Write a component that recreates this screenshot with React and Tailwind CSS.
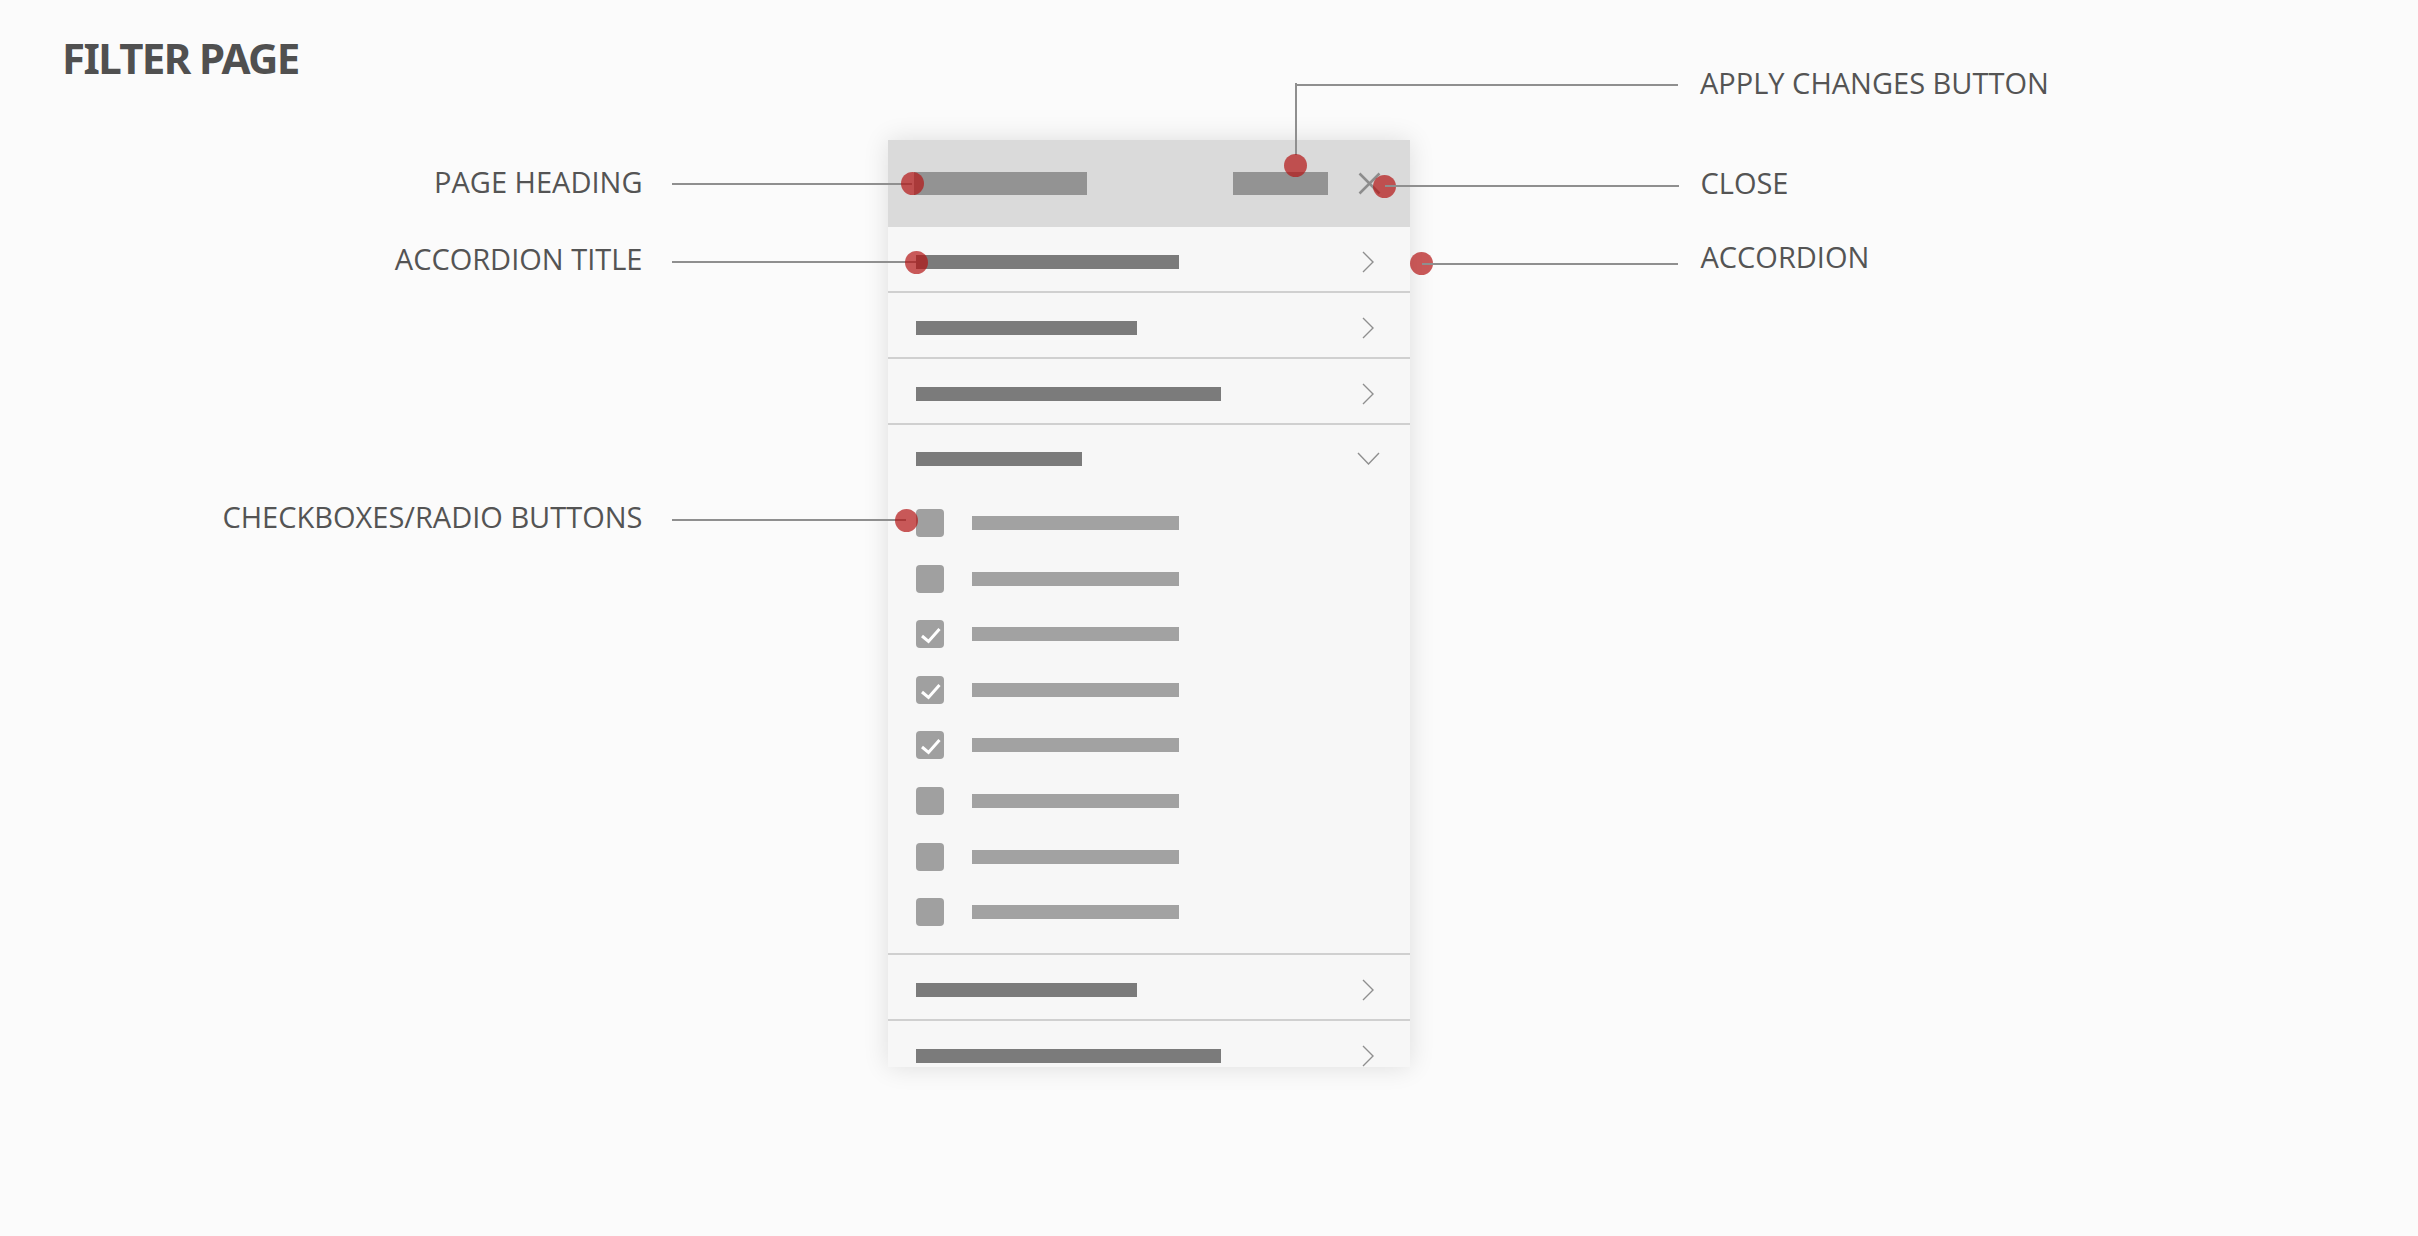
import React from "react";

const Chevron = () => (
  <div className="w-[24px] flex justify-center">
    <svg width="12" height="22" viewBox="0 0 12 22" fill="none">
      <polyline points="1,1 11,11 1,21" stroke="#8f8f8f" strokeWidth="1.4" />
    </svg>
  </div>
);

const ChevronDown = () => (
  <div className="w-[24px] flex justify-center">
    <svg width="23" height="13" viewBox="0 0 23 13" fill="none">
      <polyline points="1,1 11.5,12 22,1" stroke="#8f8f8f" strokeWidth="1.4" />
    </svg>
  </div>
);

const Row = ({ w }) => (
  <div className="h-[66px] pt-[6px] border-b-2 border-[#d0d0d0] flex items-center justify-between pl-[28px] pr-[30px]">
    <div className="h-[14px] bg-[#7b7b7b]" style={{ width: w }} />
    <Chevron />
  </div>
);

const Check = ({ checked }) => (
  <div className="flex items-center gap-[28px] h-[28px]">
    <div className="w-[28px] h-[28px] rounded-[4px] bg-[#a0a0a0] flex items-center justify-center">
      {checked && (
        <svg width="28" height="28" viewBox="0 0 28 28" fill="none">
          <polyline points="6,16 12.5,21.5 23.5,9" stroke="#ffffff" strokeWidth="3" />
        </svg>
      )}
    </div>
    <div className="w-[207px] h-[14px] bg-[#a2a2a2]" />
  </div>
);

const Dot = () => <div className="w-[23px] h-[23px] shrink-0 rounded-full bg-[rgba(180,20,20,0.7)]" />;

const Label = ({ children, shift = "" }) => (
  <div className={`text-[29px] leading-none text-[#545454] whitespace-nowrap ${shift}`}>{children}</div>
);

/* callout pointing right: label — line — dot ; anchored by dot centre */
const LeftCallout = ({ label, dx, dy, line, shift }) => (
  <div
    className="absolute h-[23px] flex items-center"
    style={{ right: 2418 - (dx + 11.5), top: dy - 11.5 }}
  >
    <Label shift={shift}>{label}</Label>
    <div className="h-[2px] bg-[#8f8f8f] ml-[29px] -mr-[11px]" style={{ width: line }} />
    <Dot />
  </div>
);

/* callout pointing left: dot — line — label */
const RightCallout = ({ label, dx, dy, shift }) => (
  <div className="absolute h-[23px] flex items-center" style={{ left: dx - 11.5, top: dy - 11.5 }}>
    <Dot />
    <div className="h-[2px] bg-[#8f8f8f] -ml-[11px] mr-[22px]" style={{ width: 1678 - dx }} />
    <Label shift={shift}>{label}</Label>
  </div>
);

export default function App() {
  const checks = [false, false, true, true, true, false, false, false];
  return (
    <div
      className="relative w-[2418px] h-[1236px] overflow-hidden bg-[#fbfbfb] pt-[37px] pl-[62px]"
      style={{ fontFamily: '"Open Sans", "Noto Sans", sans-serif' }}
    >
      <h1
        className="text-[42px] leading-none font-bold text-[#505050] h-[42px] tracking-[-1.6px]"
        style={{ fontFamily: '"Noto Sans", "Open Sans", sans-serif' }}
      >
        FILTER PAGE
      </h1>

      <div className="mt-[61px] ml-[826px] w-[522px] h-[927px] bg-[#f7f7f7] overflow-hidden shadow-[0_0_24px_rgba(0,0,0,0.12)]">
        <div className="h-[87px] bg-[#dadada] flex items-center pl-[26px] pr-[29px]">
          <div className="w-[173px] h-[23px] bg-[#939393]" />
          <div className="flex-1" />
          <div className="w-[95px] h-[23px] bg-[#939393]" />
          <svg className="ml-[30px]" width="23" height="23" viewBox="0 0 23 23" fill="none">
            <line x1="1.5" y1="1.5" x2="21.5" y2="21.5" stroke="#8d8d8d" strokeWidth="2.5" />
            <line x1="21.5" y1="1.5" x2="1.5" y2="21.5" stroke="#8d8d8d" strokeWidth="2.5" />
          </svg>
        </div>

        <Row w={263} />
        <Row w={221} />
        <Row w={305} />

        <div className="border-b-2 border-[#d0d0d0]">
          <div className="h-[64px] pt-[3px] flex items-center justify-between pl-[28px] pr-[30px]">
            <div className="w-[166px] h-[14px] bg-[#7b7b7b]" />
            <ChevronDown />
          </div>
          <div className="flex flex-col gap-[27.6px] pt-[20px] pb-[27px] pl-[28px]">
            {checks.map((c, i) => (
              <Check key={i} checked={c} />
            ))}
          </div>
        </div>

        <Row w={221} />
        <Row w={305} />
      </div>

      {/* annotation callouts over the canvas */}
      <LeftCallout label="PAGE HEADING" dx={912} dy={183.5} line={240} shift="-translate-y-[2px]" />
      <LeftCallout label="ACCORDION TITLE" dx={916} dy={262} line={244} shift="-translate-y-[4px]" />
      <LeftCallout label="CHECKBOXES/RADIO BUTTONS" dx={906} dy={520} line={234} shift="-translate-y-[4px]" />
      <RightCallout label="CLOSE" dx={1384} dy={186} shift="-translate-y-[4px]" />
      <RightCallout label="ACCORDION" dx={1421.7} dy={263.8} shift="-translate-y-[7px]" />

      {/* apply changes: elbow callout */}
      <div className="absolute left-[1284px] top-[73px] flex items-start">
        <div className="flex flex-col items-center w-[23px]">
          <div className="w-[2px] h-[72px] bg-[#8f8f8f] mt-[10px]" />
          <div className="-mt-[1px]">
            <Dot />
          </div>
        </div>
        <div className="h-[2px] w-[383px] bg-[#8f8f8f] mt-[10.5px] -ml-[12px] mr-[22px]" />
        <Label shift="-mt-[5px]">APPLY CHANGES BUTTON</Label>
      </div>
    </div>
  );
}
